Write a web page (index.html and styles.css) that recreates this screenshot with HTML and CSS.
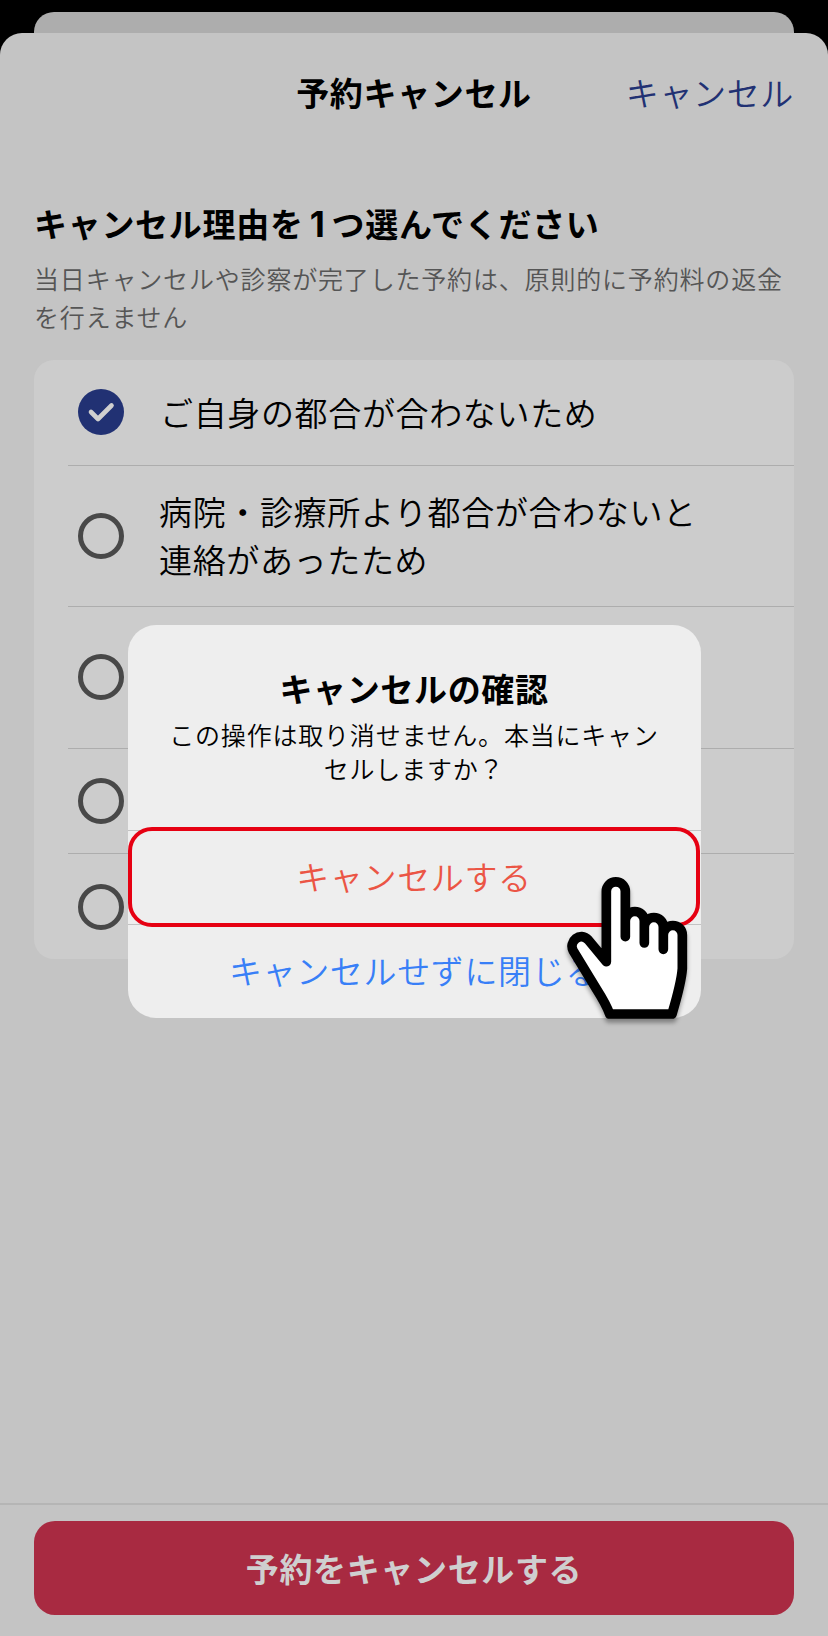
FILE: index.html
```html
<!DOCTYPE html>
<html lang="ja">
<head>
    <meta charset="UTF-8">
    <meta name="viewport" content="width=device-width, initial-scale=1.0">
    <title>予約キャンセル</title>
    <link rel="stylesheet" href="styles.css">
</head>
<body>
    <div class="back-sheet"></div>
    <div class="sheet">
        <header class="header">
            <h1>予約キャンセル</h1>
            <a class="header-cancel">キャンセル</a>
        </header>

        <main class="content">
            <h2>キャンセル理由を<span class="num">1</span>つ選んでください</h2>
            <p class="note">当日キャンセルや診察が完了した予約は、原則的に予約料の返金を行えません</p>

            <ul class="reasons">
                <li class="reason">
                    <span class="radio checked">
                        <svg viewBox="0 0 46 46" width="46" height="46"><path d="M13 23l7 7L33.500 16.500" fill="none" stroke="#cfcfcf" stroke-width="4.600" stroke-linecap="round" stroke-linejoin="round"/></svg>
                    </span>
                    <span class="label">ご自身の都合が合わないため</span>
                </li>
                <li class="reason tall">
                    <span class="radio"></span>
                    <span class="label">病院・診療所より都合が合わないと<br>連絡があったため</span>
                </li>
                <li class="reason tall">
                    <span class="radio"></span>
                </li>
                <li class="reason">
                    <span class="radio"></span>
                </li>
                <li class="reason">
                    <span class="radio"></span>
                </li>
            </ul>
        </main>

        <footer class="footer">
            <button class="submit">予約をキャンセルする</button>
        </footer>
    </div>

    <div class="dialog">
        <div class="dialog-text">
            <h3>キャンセルの確認</h3>
            <p>この操作は取り消せません。本当にキャン<br>セルしますか？</p>
        </div>
        <button class="dialog-button danger">キャンセルする</button>
        <button class="dialog-button">キャンセルせずに閉じる</button>
        <div class="highlight"></div>
    </div>

    <svg class="hand" viewBox="60 60 420 480" width="140" height="160">
        <path d="M199 335V124a28.500 28.500 0 0 1 57 0V213a28.500 28.500 0 0 1 57 0V231a28.500 28.500 0 0 1 57 0V255a28.500 28.500 0 0 1 57 0V356Q424 398 396 492H209Q198 462 170 418L100 303C84 275 121 243 145 270Z" fill="#fff"/>
        <path d="M199 335V124a28.500 28.500 0 0 1 57 0V213a28.500 28.500 0 0 1 57 0V231a28.500 28.500 0 0 1 57 0V255a28.500 28.500 0 0 1 57 0V356Q424 398 396 492H209Q198 462 170 418L100 303C84 275 121 243 145 270ZM256 205V260M313 220V279M370 245V298" fill="none" stroke="#000" stroke-width="29" stroke-linecap="round" stroke-linejoin="round"/>
    </svg>
</body>
</html>
```
FILE: styles.css
```css
* {
    box-sizing: border-box;
}
body {
    margin: 0;
    height: 1636px;
    padding-top: 12px;
    background: #000;
    color: #000;
    font-family: "Noto Sans CJK JP", sans-serif;
    font-size: 33px;
    font-weight: 350;
    letter-spacing: 0.65px;
    position: relative;
    overflow: hidden;
}
h1, h2, h3, p, ul {
    margin: 0;
    padding: 0;
}
.back-sheet {
    height: 21px;
    margin: 0 34px;
    background: #adadad;
    border-radius: 20px 20px 0 0;
}
.sheet {
    height: 1603px;
    background: #c4c4c4;
    border-radius: 22px 22px 0 0;
    display: flex;
    flex-direction: column;
}
.header {
    height: 117px;
    padding: 0 34px;
    display: grid;
    grid-template-columns: 1fr auto 1fr;
    align-items: center;
}
.header h1 {
    grid-column: 2;
    font-size: 33px;
    line-height: 48px;
}
.header-cancel {
    justify-self: end;
    color: #213173;
    line-height: 48px;
}
.content {
    flex: 1;
    padding: 49px 34px 0;
}
.content h2 {
    height: 48px;
    font-size: 33px;
    line-height: 48px;
    letter-spacing: 0.7px;
}
.num {
    display: inline-block;
    width: 28px;
    text-align: center;
    font-family: Inter, sans-serif;
    font-size: 35px;
    font-weight: 700;
}
.note {
    margin: 12px 0 25px;
    color: #555;
    font-size: 25px;
    line-height: 38px;
    letter-spacing: 0.82px;
    word-break: break-all;
}
.reasons {
    list-style: none;
    background: #ccc;
    border-radius: 20px;
    padding-left: 34px;
}
.reason {
    height: 105.500px;
    padding-left: 10px;
    display: flex;
    align-items: center;
    gap: 35px;
    border-bottom: 1px solid #adadad;
}
.reason.tall {
    height: 141.500px;
}
.reason:last-child {
    height: 105px;
    border-bottom: none;
}
.radio {
    flex: none;
    width: 46px;
    height: 46px;
    border: 5px solid #484848;
    border-radius: 50%;
}
.radio.checked {
    border: none;
    background: #213173;
}
.radio.checked + .label {
    padding-left: 1px;
}
.radio svg {
    display: block;
}
.label {
    line-height: 47.500px;
    white-space: nowrap;
}
.footer {
    height: 133px;
    padding: 16px 34px 0;
    border-top: 2px solid #b5b5b5;
}
.submit {
    display: block;
    width: 100%;
    height: 94px;
    padding: 0 0 1px;
    border: none;
    border-radius: 21px;
    background: #a82a41;
    color: #cfcfcf;
    font: inherit;
    font-weight: bold;
    letter-spacing: inherit;
}
.dialog {
    position: absolute;
    top: 625px;
    left: 127.500px;
    width: 573px;
    height: 393px;
    border-radius: 28px;
    background: #eee;
}
.dialog-text {
    height: 205px;
    padding-top: 39px;
    text-align: center;
}
.dialog h3 {
    font-size: 33px;
    line-height: 48px;
}
.dialog p {
    margin-top: 5px;
    font-size: 25px;
    line-height: 34px;
    letter-spacing: 0.8px;
}
.dialog-button {
    display: block;
    width: 100%;
    height: 94px;
    padding: 0 0 3px;
    border: none;
    border-top: 1px solid #c3c3c3;
    background: none;
    color: #387ff7;
    font: inherit;
    letter-spacing: inherit;
}
.dialog-button.danger {
    color: #eb5545;
}
.highlight {
    position: absolute;
    top: 202px;
    left: 0.500px;
    width: 572px;
    height: 100px;
    border: 4px solid #e60012;
    border-radius: 24px;
}
.hand {
    position: absolute;
    top: 870px;
    left: 560px;
    filter: drop-shadow(0 4px 2px rgba(0, 0, 0, 0.35));
}
```
